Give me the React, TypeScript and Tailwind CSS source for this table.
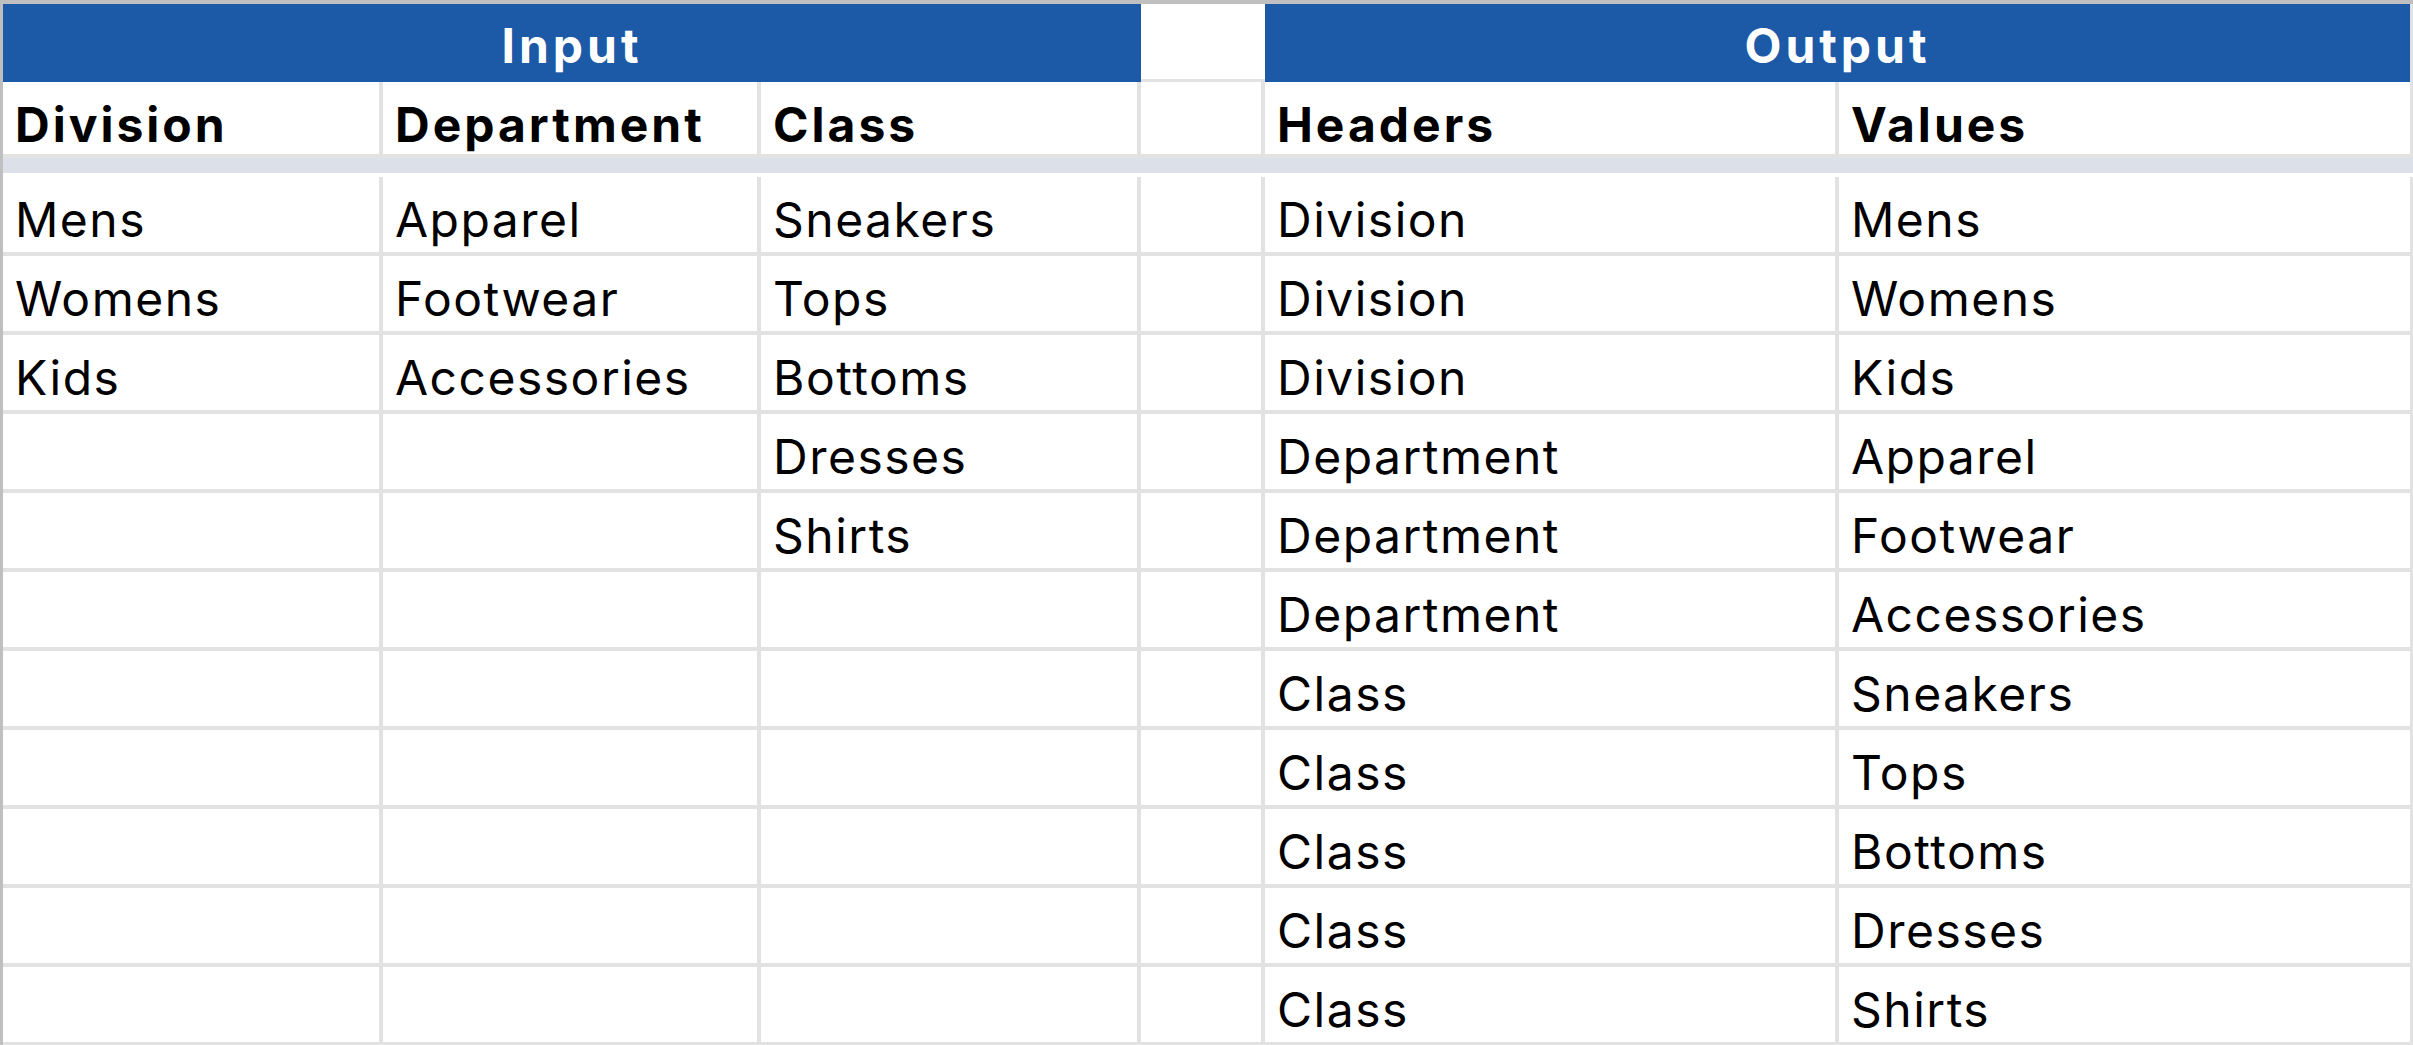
import React from "react";

// Tabla de ejemplo: columnas de entrada y su versión "despivotada" en la salida
const inputRows: [string, string, string][] = [
  ["Mens", "Apparel", "Sneakers"],
  ["Womens", "Footwear", "Tops"],
  ["Kids", "Accessories", "Bottoms"],
  ["", "", "Dresses"],
  ["", "", "Shirts"],
  ["", "", ""],
  ["", "", ""],
  ["", "", ""],
  ["", "", ""],
  ["", "", ""],
  ["", "", ""],
];

const outputRows: [string, string][] = [
  ["Division", "Mens"],
  ["Division", "Womens"],
  ["Division", "Kids"],
  ["Department", "Apparel"],
  ["Department", "Footwear"],
  ["Department", "Accessories"],
  ["Class", "Sneakers"],
  ["Class", "Tops"],
  ["Class", "Bottoms"],
  ["Class", "Dresses"],
  ["Class", "Shirts"],
];

const font = { fontFamily: "Inter, 'Liberation Sans', sans-serif" };

function Cell({ children, bold, last }: { children?: React.ReactNode; bold?: boolean; last?: boolean }) {
  return (
    <div
      className={`flex items-center overflow-hidden whitespace-nowrap border-b-4 border-[#e2e2e2] pl-[12px] text-black ${
        last ? "border-r-[3px]" : "border-r-4"
      } ${bold ? "pt-[14px] text-[48px] font-bold tracking-[3px]" : "pt-[10px] text-[48px] font-normal tracking-[1.5px]"}`}
    >
      {children}
    </div>
  );
}

export default function App() {
  return (
    <div
      className="h-[1045px] w-[2413px] overflow-hidden border-l-[3px] border-t-4 border-[#bfbfbf] bg-white"
      style={font}
    >
      <div className="grid grid-cols-[380px_378px_380px_124px_574px_574px] grid-rows-[78px_76px_19px_repeat(11,79px)]">
        {/* fila de títulos */}
        <div className="col-span-3 flex items-center justify-center bg-[#1c5aa7] pt-[6px] text-[48px] font-bold tracking-[4px] text-white">
          Input
        </div>
        <div className="border-b-[3px] border-[#e2e2e2] bg-white" />
        <div className="col-span-2 flex items-center justify-center border-r-[3px] border-[#e2e2e2] bg-[#1c5aa7] pt-[6px] text-[48px] font-bold tracking-[4px] text-white">
          Output
        </div>

        {/* encabezados */}
        <Cell bold>Division</Cell>
        <Cell bold>Department</Cell>
        <Cell bold>Class</Cell>
        <Cell />
        <Cell bold>Headers</Cell>
        <Cell bold last>
          Values
        </Cell>

        {/* banda congelada */}
        <div className="col-span-6 h-[15px] bg-[#dce1e9]" />

        {inputRows.map((row, i) => (
          <React.Fragment key={i}>
            <Cell>{row[0]}</Cell>
            <Cell>{row[1]}</Cell>
            <Cell>{row[2]}</Cell>
            <Cell />
            <Cell>{outputRows[i][0]}</Cell>
            <Cell last>{outputRows[i][1]}</Cell>
          </React.Fragment>
        ))}
      </div>
    </div>
  );
}
